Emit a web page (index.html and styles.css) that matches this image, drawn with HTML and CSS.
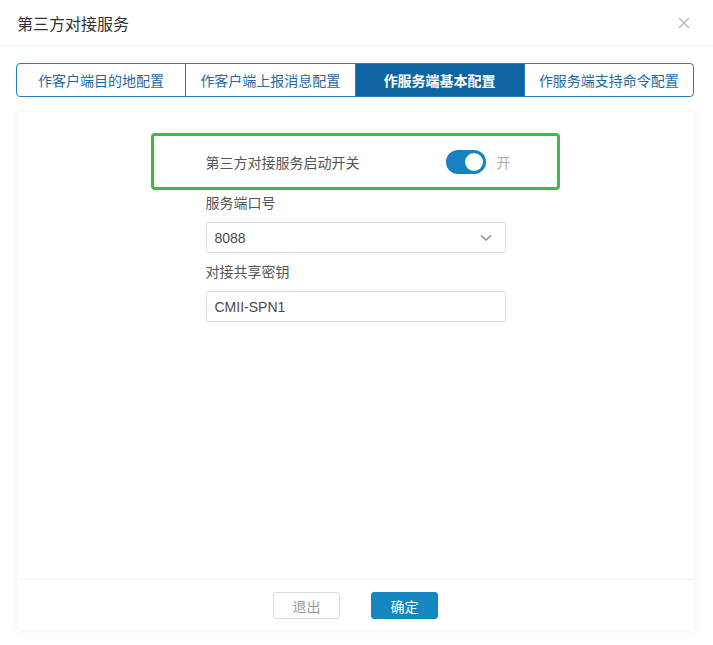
FILE: index.html
```html
<!DOCTYPE html>
<html lang="zh">
<head>
<meta charset="utf-8">
<link rel="stylesheet" href="styles.css">
</head>
<body>
<div class="modal">
  <div class="header">
    <span class="title">第三方对接服务</span>
    <svg class="close" width="12" height="12" viewBox="0 0 12 12"><path d="M1 1L11 11M11 1L1 11" stroke="#b4b4b4" stroke-width="1.3" fill="none"/></svg>
  </div>
  <div class="content">
    <div class="tabs">
      <div class="tab">作客户端目的地配置</div>
      <div class="tab">作客户端上报消息配置</div>
      <div class="tab active">作服务端基本配置</div>
      <div class="tab">作服务端支持命令配置</div>
    </div>
    <div class="card">
      <div class="card-body">
        <div class="switch-box">
          <div class="switch-row">
            <span class="switch-label">第三方对接服务启动开关</span>
            <span class="toggle"><span class="knob"></span></span>
            <span class="toggle-text">开</span>
          </div>
        </div>
        <div class="field">
          <div class="label">服务端口号</div>
          <div class="control select">
            <span>8088</span>
            <svg width="12" height="8" viewBox="0 0 12 8"><path d="M1 1.5L6 6L11 1.5" stroke="#8c8c8c" stroke-width="1.4" fill="none"/></svg>
          </div>
        </div>
        <div class="field second">
          <div class="label">对接共享密钥</div>
          <div class="control"><span>CMII-SPN1</span></div>
        </div>
      </div>
      <div class="footer">
        <button class="btn btn-cancel">退出</button>
        <button class="btn btn-ok">确定</button>
      </div>
    </div>
  </div>
</div>
</body>
</html>
```
FILE: styles.css
```css
html, body {
  margin: 0;
  padding: 0;
  background: #ffffff;
  font-family: "Liberation Sans", "Noto Sans CJK SC", sans-serif;
  color: #333;
}
.modal {
  width: 713px;
  height: 645px;
  background: #fff;
  display: flex;
  flex-direction: column;
}
.header {
  height: 46px;
  box-sizing: border-box;
  border-bottom: 1px solid #f3f3f8;
  display: flex;
  align-items: center;
  justify-content: space-between;
  padding: 0 23px 0 17px;
}
.title {
  font-size: 16px;
  color: #303133;
}
.close {
  display: block;
}
.content {
  padding: 17px 19px 0 16px;
  display: flex;
  flex-direction: column;
  gap: 15px;
}
.tabs {
  display: flex;
  height: 34px;
  box-sizing: border-box;
  border: 1px solid #2b7bb5;
  border-radius: 4px;
  overflow: hidden;
}
.tab {
  flex: 1;
  display: flex;
  align-items: center;
  justify-content: center;
  font-size: 14px;
  color: #1d6aa3;
  border-left: 1px solid #2b7bb5;
}
.tab:first-child {
  border-left: none;
}
.tab.active {
  background: #0f65a1;
  color: #fff;
  font-weight: bold;
}
.card {
  margin-left: 1px;
  height: 518px;
  background: #fff;
  border-radius: 4px;
  box-shadow: 0 0 6px rgba(0, 0, 0, 0.07);
  display: flex;
  flex-direction: column;
}
.card-body {
  flex: 1;
  display: flex;
  flex-direction: column;
  align-items: center;
  padding-top: 21px;
}
.switch-box {
  width: 409px;
  height: 57px;
  box-sizing: border-box;
  border: 3px solid #3cb94a;
  border-radius: 4px;
  display: flex;
  align-items: center;
  justify-content: center;
}
.switch-row {
  width: 300px;
  display: flex;
  align-items: center;
  font-size: 14px;
  color: #555;
}
.switch-label {
  flex: 1;
}
.toggle {
  width: 40px;
  height: 24px;
  border-radius: 12px;
  background: #1681bf;
  position: relative;
  margin-right: 11px;
}
.knob {
  position: absolute;
  right: 3px;
  top: 3px;
  width: 18px;
  height: 18px;
  border-radius: 50%;
  background: #fff;
}
.toggle-text {
  color: #aaa;
  width: 9px;
}
.field {
  width: 300px;
}
.field.second {
  margin-top: 6px;
}
.label {
  font-size: 14px;
  color: #555;
  height: 32px;
  line-height: 22px;
  padding-top: 2px;
  box-sizing: border-box;
}
.control {
  height: 31px;
  box-sizing: border-box;
  border: 1px solid #dcdfe6;
  border-radius: 3px;
  display: flex;
  align-items: center;
  justify-content: space-between;
  padding: 0 13px 0 8px;
  font-size: 14px;
  color: #4a4a4a;
}
.footer {
  height: 51px;
  border-top: 1px solid #f3f3f8;
  display: flex;
  justify-content: center;
  align-items: center;
  gap: 31px;
  padding-top: 1px;
  box-sizing: border-box;
}
.btn {
  width: 67px;
  height: 27px;
  border-radius: 3px;
  font-family: "Liberation Sans", "Noto Sans CJK SC", sans-serif;
  font-size: 14px;
  padding: 0;
}
.btn-cancel {
  background: #fff;
  border: 1px solid #dcdcdc;
  color: #999;
}
.btn-ok {
  background: #1586c0;
  border: 1px solid #1586c0;
  color: #fff;
}
```
